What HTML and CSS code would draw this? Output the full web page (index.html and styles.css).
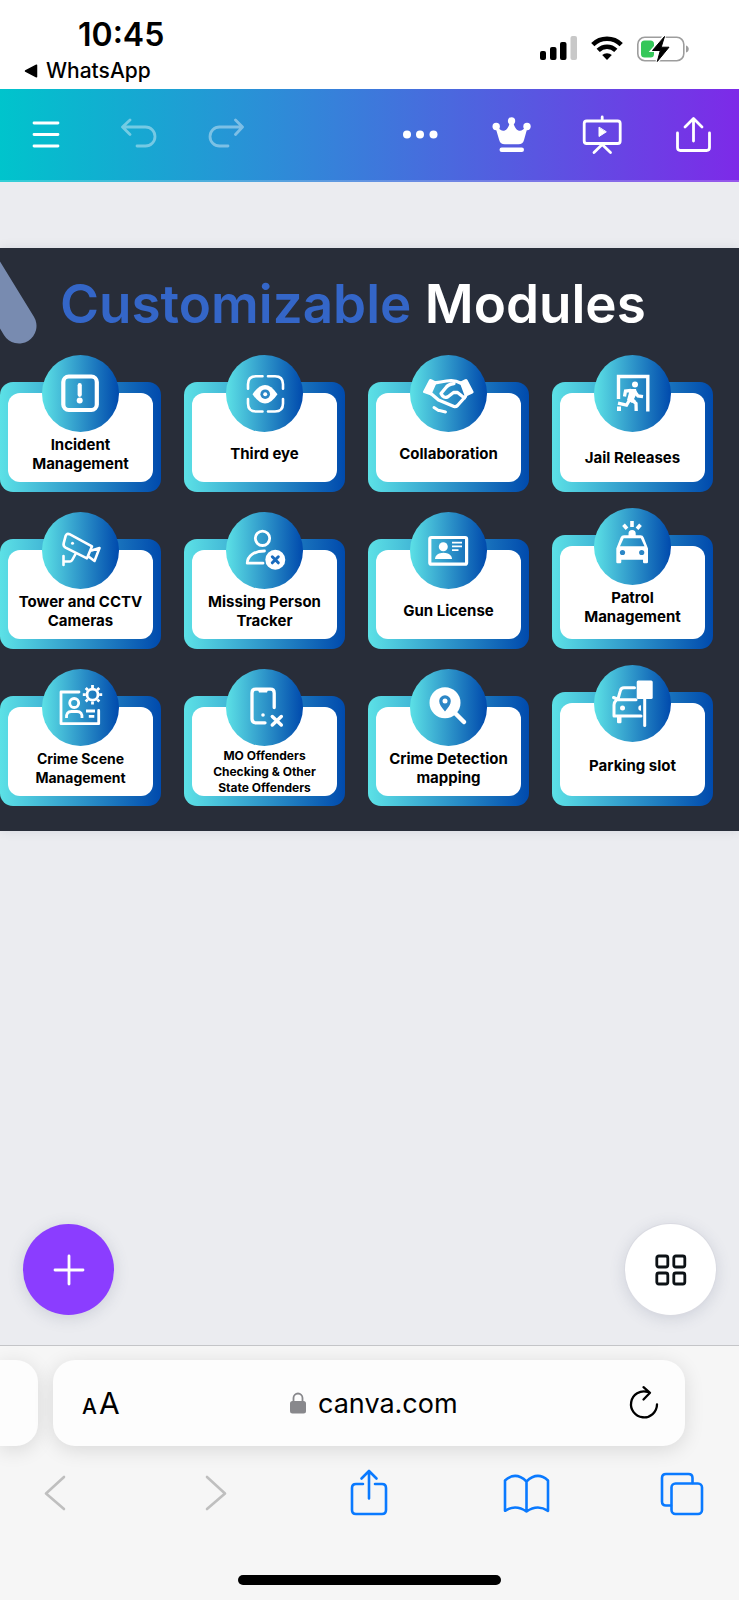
FILE: index.html
```html
<!DOCTYPE html>
<html lang="en">
<head>
<meta charset="utf-8">
<meta name="viewport" content="width=device-width, initial-scale=1">
<title>Customizable Modules</title>
<link rel="stylesheet" href="styles.css">
</head>
<body>
<div class="status">
  <div class="status-left">
    <time class="clock">10:45</time>
    <a class="back-app" href="#"><svg width="14" height="14" viewBox="0 0 14 14"><path d="M1.500 7 12.500 1.200v11.600z" fill="#000" stroke="#000" stroke-width="1.500" stroke-linejoin="round"/></svg>WhatsApp</a>
  </div>
  <div class="status-right">
    <svg width="37" height="25" viewBox="0 0 37 25"><rect x="0" y="15" width="6" height="9" rx="2"/><rect x="10" y="11" width="6.500" height="13" rx="2"/><rect x="20" y="6" width="6.500" height="18" rx="2"/><rect x="30.500" y="0" width="6.500" height="24" rx="2" fill="#c8c8c8"/></svg>
    <svg width="32" height="25" viewBox="0 0 32 25" fill="none" stroke="#000" stroke-width="4.600"><path d="M1.800 8.600a20.200 20.200 0 0 1 28.400 0"/><path d="M7.200 14.400a12.600 12.600 0 0 1 17.600 0"/><path d="M16 24l-4.800-4.900a6.900 6.900 0 0 1 9.600 0z" fill="#000" stroke="none"/></svg>
    <svg width="52" height="26" viewBox="0 0 52 26"><rect x=".8" y="1.300" width="46" height="23.400" rx="7" fill="none" stroke="#9d9d9d" stroke-width="1.600"/><path d="M49 9.500c3.700 1 3.700 6 0 7z" fill="#9d9d9d"/><rect x="4" y="4.500" width="13" height="17" rx="3.500" fill="#34c759"/><path d="M27.500 0 15 14.500h8L20 26 32.500 11.200h-8.300z" stroke="#fff" stroke-width="3"/><path d="M27.500.500 15.500 14.500h7.800L20.300 25.500 32 11.200h-7.800z" stroke="#000" stroke-linejoin="round"/></svg>
  </div>
</div>

<header class="toolbar">
  <div class="tools">
    <button aria-label="Menu"><svg class="line" viewBox="0 0 44 44"><path d="M10 11h24M10 22.500h24M10 34h24"/></svg></button>
    <button aria-label="Undo" disabled><svg class="line" viewBox="0 0 44 44"><path d="M15 8l-7.500 7L15 22.500M8 15h22.500a9.500 9.500 0 0 1 0 19H22"/></svg></button>
    <button aria-label="Redo" disabled><svg class="line" viewBox="0 0 44 44"><path d="M29.500 8l7 7-7 7.500M36 15H13.500a9.500 9.500 0 0 0 0 19H22"/></svg></button>
  </div>
  <div class="tools">
    <button aria-label="More"><svg viewBox="0 0 44 44" fill="#fff"><circle cx="9" cy="22.500" r="4"/><circle cx="22" cy="22.500" r="4"/><circle cx="35.500" cy="22.500" r="4"/></svg></button>
    <button aria-label="Premium"><svg viewBox="0 0 44 44" fill="#fff"><circle cx="22.500" cy="9" r="3.700"/><circle cx="7.200" cy="14.500" r="3.700"/><circle cx="38" cy="14.500" r="3.700"/><path d="M6.500 15.500l2.500-.5c3.500 6 9.500 5.500 12-5h3.200c2.300 10.500 8.500 11 12 5l2.300.5-3.500 12.500c-.8 3-2.500 4.200-5.500 4.200H15.800c-3 0-4.800-1.200-5.600-4.200z"/><rect x="10.500" y="35.500" width="24.500" height="4.500" rx="2.200"/></svg></button>
    <button aria-label="Present"><svg class="line" viewBox="0 0 44 44"><rect x="4.200" y="9" width="36" height="22.500" rx="2.500"/><path d="M22.200 5v3M14 40.500l8.200-8 8.300 8"/><path d="M19 15.500v9l7-4.500z" fill="#fff" stroke-width="1"/></svg></button>
    <button aria-label="Share"><svg class="line" viewBox="0 0 44 44"><path d="M22.500 29V7M14 15l8.500-8.500L31 15M6.500 21v14.500q0 3 3 3h26q3 0 3-3V21"/></svg></button>
  </div>
</header>

<main class="canvas">
  <section class="slide">
    <svg class="stripe" width="40" height="100" viewBox="0 0 40 100"><path d="M19 78-35-10" stroke="#788bb0" stroke-width="35" stroke-linecap="round"/></svg>
    <h1><span class="accent">Customizable</span> Modules</h1>
    <ul class="modules">
      <li class="module">
        <svg class="badge" viewBox="0 0 77 77"><rect x="21.300" y="21.500" width="33.500" height="33.500" rx="5.500" stroke-width="4.200"/><path d="M37.700 30.200v9.600" stroke-width="4.200"/><circle class="solid" cx="37.700" cy="45.500" r="3"/></svg>
        <div class="frame"><p class="label">Incident<br>Management</p></div>
      </li>
      <li class="module">
        <svg class="badge" viewBox="0 0 77 77"><path d="M36.500 21.200h-6.500q-8 0-8 8v4.500M42 21.200h7q8 0 8 8v4.500M36.500 56.500h-6.500q-8 0-8-8V44M42 56.500h7q8 0 8-8V44" stroke-width="2.600"/><path class="solid" d="M26.500 39.200q12.500-18.600 25 0-12.500 18.600-25 0z"/><circle class="cut" cx="39.200" cy="39.200" r="4.800"/><circle class="solid" cx="39.200" cy="39.200" r="2"/></svg>
        <div class="frame"><p class="label">Third eye</p></div>
      </li>
      <li class="module">
        <svg class="badge" viewBox="0 0 77 77"><path class="solid" d="M13 36.500 19 25q1-1.500 3-.5l5 2.500-6 13.500-7-2.500q-1.500-.5-1-1.500zM63.500 36.500 57.500 25q-1-1.500-3-.5l-5 2.500 5.500 15 7.500-3.500q1.500-.5 1-2z"/><path d="M24 28q7-1 12.500-2 8-1.500 14 2M21.500 39l7 6 15.500 6.500q2 .5 3.500-1l8-9M44 28.500q-6 1-8 4l-5 6q2.500 5.500 7 3.200l5.500-4.200h4l7 5.500" stroke-width="3.300"/><path d="M24 52.500l4.500 3M29.500 55.500l6 1.500" stroke-width="3"/></svg>
        <div class="frame"><p class="label">Collaboration</p></div>
      </li>
      <li class="module">
        <svg class="badge" viewBox="0 0 77 77"><path d="M24.500 44V21.500h29.300v35" stroke-width="3.400" stroke-linecap="butt" stroke-linejoin="miter"/><circle class="solid" cx="41" cy="29.500" r="3"/><rect class="solid" x="23" y="51.500" width="4" height="4.500"/><path d="M39 36l-3 8M37 35.500l-5.500.5-1 5.500M41 37l3 4 5 .7M37 44l5 4.500.2 7.500M35.500 45l-3 5.200-8.500-2" stroke-width="3.300" stroke-linejoin="miter" stroke-linecap="butt"/><path class="solid" d="M36 34h6l1 4-3 6 2 2-4 2-5-3z"/></svg>
        <div class="frame"><p class="label low">Jail Releases</p></div>
      </li>

      <li class="module">
        <svg class="badge" viewBox="0 0 77 77" stroke-width="2.600"><path d="M27.500 22.200q-2.600-1.200-3.800 1.500l-2 7.500q-.8 3 1.800 4.500l21.500 10.600 5-12z"/><circle class="solid" cx="30.500" cy="31.300" r="1.500"/><path d="M49.500 38.500l8-2.500-5 13-6-4.500M21.500 44v9M21.500 49.500h6.500q1.500 0 2.500-2l3-5.500"/></svg>
        <div class="frame"><p class="label">Tower and CCTV<br>Cameras</p></div>
      </li>
      <li class="module">
        <svg class="badge" viewBox="0 0 77 77"><circle cx="36.500" cy="26.300" r="7.200" stroke-width="2.800"/><path d="M38.500 39C28 39 21.500 44 21.200 51.200H37" stroke-width="2.800"/><circle class="solid" cx="49.300" cy="47.800" r="10"/><path class="mark" d="M46.300 44.800l6 6m0-6l-6 6" stroke-width="3"/></svg>
        <div class="frame"><p class="label">Missing Person<br>Tracker</p></div>
      </li>
      <li class="module">
        <svg class="badge" viewBox="0 0 77 77"><rect x="19.800" y="25.500" width="36.800" height="26.700" rx="1.500" stroke-width="3.200"/><circle class="solid" cx="33.300" cy="34.800" r="4.500"/><path class="solid" d="M25 47c0-3.500 3.500-6.300 8.500-6.300S42 43.500 42 47z"/><path d="M42 30.700h10M42 34.400h10M42 38.100h6.500" stroke-width="1.700" stroke-linecap="butt"/></svg>
        <div class="frame"><p class="label">Gun License</p></div>
      </li>
      <li class="module">
        <svg class="badge" viewBox="0 0 77 77"><path d="M38 13v6M29.500 16.800l3.500 4M46.500 16.800l-3.500 4" stroke-width="3.600" stroke-linecap="butt"/><path class="solid" d="M34.500 28v-2.500a3.600 3.600 0 0 1 7.200 0V28z"/><path class="solid" fill-rule="evenodd" d="M30 27.300h16.500q2.500 0 3.200 2.300l4.300 10.900v13.500q0 1.200-1.200 1.200h-2.600q-1.200 0-1.200-1.200v-2.300H27.300V54q0 1.200-1.200 1.200h-2.600q-1.200 0-1.200-1.200V40.500l4.300-10.900q.8-2.300 3.400-2.300zM29.700 30.300 26 38.300h24.500l-3.700-8z"/><circle class="cut" cx="28.500" cy="44.500" r="2.600"/><circle class="cut" cx="47.700" cy="44.500" r="2.600"/></svg>
        <div class="frame"><p class="label tall high">Patrol<br>Management</p></div>
      </li>

      <li class="module">
        <svg class="badge" viewBox="0 0 77 77" stroke-width="2.800"><path d="M37 23H19v31.700h37.700V41.500"/><circle cx="32.200" cy="34" r="4.500"/><path d="M24.500 49q-.5-6.500 5-6.500h5.500q5.500 0 5 6.500M44 42h9M46.800 47.300h5.500" stroke-linecap="butt"/><circle cx="50.500" cy="25.700" r="5.500"/><path d="M50.500 19v-3M50.500 32.400v3M43.800 25.700h-3M57.200 25.700h3M45.800 21l-2.100-2.100M55.200 30.400l2.100 2.100M55.200 21l2.100-2.100M45.800 30.400l-2.100 2.100" stroke-linecap="butt"/></svg>
        <div class="frame"><p class="label medium">Crime Scene<br>Management</p></div>
      </li>
      <li class="module">
        <svg class="badge" viewBox="0 0 77 77"><path d="M48.200 38.500V24q0-3.800-3.800-3.800H29.800Q26 20.200 26 24v26q0 3.800 3.800 3.800H39" stroke-width="3.300"/><path class="solid" d="M31.500 19.500h11l-1.500 4h-8z"/><circle class="solid" cx="37" cy="46" r="1.800"/><path d="M46.300 47.500l9 8.500m0-8.500l-9 8.500" stroke-width="3.500"/></svg>
        <div class="frame"><p class="label small low">MO Offenders<br>Checking &amp; Other<br>State Offenders</p></div>
      </li>
      <li class="module">
        <svg class="badge" viewBox="0 0 77 77"><circle class="solid" cx="35" cy="33.700" r="15.500"/><path d="M44 43l10 10" stroke-width="4.500"/><path class="cut" d="M35 42.500c-3.500-4-5.800-7.300-5.800-10.500a5.800 5.800 0 0 1 11.600 0c0 3.200-2.300 6.500-5.800 10.500z"/><circle class="solid" cx="35" cy="32" r="2.500"/></svg>
        <div class="frame"><p class="label">Crime Detection<br>mapping</p></div>
      </li>
      <li class="module">
        <svg class="badge" viewBox="0 0 77 77"><path d="M40.500 22.800H30q-3 0-3.700 3L24 34M19.500 32.500l2.500 1M22.500 34.800H42M22.500 34.800Q20 37 20 40v11h27" stroke-width="3"/><circle class="solid" cx="28.500" cy="43" r="2.500"/><path class="solid" d="M47 40.300v5.400a2.700 2.700 0 0 1 0-5.400zM23 51h4.500v6q0 1.200-1.200 1.200h-2Q23 58.200 23 57z"/><rect class="solid" x="42.700" y="15.400" width="16" height="18.500" rx="1.500"/><path d="M50.700 32v28.500" stroke-width="3"/></svg>
        <div class="frame"><p class="label tall">Parking slot</p></div>
      </li>
    </ul>
  </section>
  <div class="floating">
    <button class="fab add" aria-label="Add"><svg viewBox="0 0 44 44"><path d="M22 8v28M8 22h28" fill="none" stroke="#fff" stroke-width="2.800" stroke-linecap="round"/></svg></button>
    <button class="fab pages" aria-label="Pages"><svg viewBox="0 0 44 44"><g fill="none" stroke="#0d1216" stroke-width="2.800"><rect x="7.800" y="8" width="11" height="11" rx="2"/><rect x="24.800" y="8" width="11" height="11" rx="2"/><rect x="7.800" y="25" width="11" height="11" rx="2"/><rect x="24.800" y="25" width="11" height="11" rx="2"/></g></svg></button>
  </div>
</main>

<footer class="browser">
  <div class="tabs">
    <div class="prev-tab"></div>
    <div class="address">
      <button class="text-size" aria-label="Page settings"><span class="a-small">A</span><span class="a-large">A</span></button>
      <a class="site" href="#"><svg width="16" height="22" viewBox="0 0 16 22"><path d="M3.500 10V6a4.500 4.500 0 0 1 9 0v4" fill="none" stroke="#88888c" stroke-width="1.800"/><rect x="0" y="9" width="16" height="12.500" rx="2.500" fill="#88888c"/></svg>canva.com</a>
      <button class="reload" aria-label="Reload"><svg width="32" height="36" viewBox="0 0 32 36"><path d="M19.500 6.800A13 13 0 1 0 29 19.500M15.500 2.200l6.500 5.600-6.500 6.700" fill="none" stroke="#000" stroke-width="2.300" stroke-linecap="round" stroke-linejoin="round"/></svg></button>
    </div>
  </div>
  <nav class="nav">
    <button aria-label="Back" disabled><svg viewBox="0 0 48 48"><path d="M32 8 14 24.500 32 40"/></svg></button>
    <button aria-label="Forward" disabled><svg viewBox="0 0 48 48"><path d="M18 8l18 16.500L18 40"/></svg></button>
    <button aria-label="Share"><svg viewBox="0 0 48 48"><path d="M18 15h-7q-4 0-4 4v22q0 4 4 4h26q4 0 4-4V19q0-4-4-4h-7M24 29.500V2.500M16.500 9.500 24 2l7.500 7.500"/></svg></button>
    <button aria-label="Bookmarks"><svg viewBox="0 0 48 48"><path d="M24.500 12.500Q13.500 2 3 11.500v30.300q10.500-7 21.500.7 11-7.700 21.500-.7V11.500Q35.500 2 24.500 12.500v30"/></svg></button>
    <button aria-label="Tabs"><svg viewBox="0 0 48 48"><path d="M13 36.500H8q-4 0-4-4V9q0-4 4-4h22.500q4 0 4 4v5"/><rect x="13.500" y="14.500" width="30.500" height="30.500" rx="4"/></svg></button>
  </nav>
  <div class="home-indicator"></div>
</footer>
</body>
</html>
```
FILE: styles.css
```css
* { box-sizing: border-box; }

body {
  margin: 0;
  min-height: 100vh;
  display: flex;
  flex-direction: column;
  overflow-x: hidden;
  font-family: Inter, "Liberation Sans", sans-serif;
  color: #000;
  background: #fff;
}

button {
  border: 0;
  padding: 0;
  background: none;
  color: inherit;
  font: inherit;
  line-height: 1;
}

a { color: inherit; text-decoration: none; }
svg { display: block; }

/* Status bar */
.status {
  height: 89px;
  display: flex;
  justify-content: space-between;
  padding: 16px 50px 0 24px;
}
.status-left { display: flex; flex-direction: column; }
.clock {
  padding-left: 54px;
  font-size: 32px;
  font-weight: 600;
  line-height: 38px;
}
.back-app {
  display: flex;
  align-items: center;
  gap: 8px;
  font-size: 21px;
  font-weight: 500;
  line-height: 34px;
}
.status-right { display: flex; gap: 14px; padding-top: 20px; }

/* Editor toolbar */
.toolbar {
  height: 93px;
  display: flex;
  align-items: center;
  justify-content: space-between;
  padding: 0 24px 2px;
  border-bottom: 2px solid rgba(255, 255, 255, 0.2);
  background: linear-gradient(90deg, #00c4cc, #3b7bdb 49%, #7d2ae8) border-box;
}
.tools { display: flex; gap: 47px; }
.tools svg { width: 44px; height: 44px; }
.tools button:disabled { opacity: 0.4; }
.line {
  fill: none;
  stroke: #fff;
  stroke-width: 2.8;
  stroke-linecap: round;
  stroke-linejoin: round;
}

/* Canvas and slide */
.canvas {
  flex: 1;
  display: flex;
  flex-direction: column;
  padding-top: 66px;
  background: #ebecf0;
}
.slide {
  position: relative;
  overflow: hidden;
  padding: 22px 26px 25px 0;
  background: #282d39;
  box-shadow: 0 0 10px rgba(64, 79, 109, 0.12);
}
.stripe { position: absolute; left: 0; top: 0; fill: none; }
h1 {
  margin: 0;
  padding: 0 0 17px 60px;
  font-size: 53px;
  font-weight: 600;
  line-height: 68px;
  white-space: nowrap;
  color: #fff;
}
.accent { color: #3466c8; }

.modules {
  display: grid;
  grid-template-columns: repeat(4, 1fr);
  align-items: end;
  gap: 16px 23px;
  margin: 0;
  padding: 0;
  list-style: none;
}
.badge {
  position: relative;
  width: 77px;
  height: 77px;
  margin: 0 auto -50px;
  border-radius: 50%;
  background: linear-gradient(90deg, #5ce1e6, #004aad);
  fill: none;
  stroke: #fff;
  stroke-linecap: round;
  stroke-linejoin: round;
}
.solid { fill: #fff; stroke: none; }
.cut { fill: #2b86c6; stroke: none; }
.mark { stroke: #1a6bbd; }

.frame {
  padding: 11px 8px 10px;
  border-radius: 13px;
  background: linear-gradient(90deg, #5ce1e6, #004aad);
}
.label {
  display: flex;
  flex-direction: column;
  justify-content: center;
  min-height: 89px;
  margin: 0;
  padding-top: 32px;
  border-radius: 12px;
  background: #fff;
  font-size: 15px;
  font-weight: 700;
  line-height: 19px;
  text-align: center;
  white-space: nowrap;
}
.label.tall { min-height: 93px; }
.label.low { padding-top: 40px; }
.label.high { padding-top: 28px; }
.label.medium { font-size: 14px; }
.label.small { font-size: 12px; line-height: 16px; }

/* Floating actions */
.floating {
  display: flex;
  justify-content: space-between;
  margin-top: auto;
  padding: 0 23px 30px;
}
.fab {
  display: grid;
  place-items: center;
  width: 91px;
  height: 91px;
  border-radius: 50%;
  box-shadow: 0 3px 16px rgba(64, 79, 109, 0.18);
}
.fab svg { width: 44px; height: 44px; }
.add { background: #8b3dff; }
.pages { background: #fff; box-shadow: 0 0 0 1px #dadbe2, 0 3px 16px rgba(64, 79, 109, 0.18); }

/* Browser chrome */
.browser {
  height: 255px;
  display: flex;
  flex-direction: column;
  border-top: 1px solid #c4c5c8;
  background: #f6f6f6;
}
.tabs { display: flex; gap: 15px; padding: 14px 54px 0 0; }
.prev-tab {
  width: 38px;
  border-radius: 0 22px 22px 0;
  background: #fdfdfd;
  box-shadow: 0 4px 20px rgba(0, 0, 0, 0.12);
}
.address {
  flex: 1;
  height: 86px;
  display: flex;
  align-items: center;
  justify-content: space-between;
  padding: 0 25px 0 29px;
  border-radius: 22px;
  background: #fdfdfd;
  box-shadow: 0 4px 20px rgba(0, 0, 0, 0.12);
}
.text-size { display: flex; align-items: baseline; gap: 2px; }
.a-small { font-size: 21px; font-weight: 500; }
.a-large { font-size: 30px; }
.site { display: flex; align-items: center; gap: 12px; font-size: 27px; }
.nav {
  display: flex;
  justify-content: space-between;
  padding: 23px 33px 0 32px;
}
.nav svg {
  width: 48px;
  height: 48px;
  fill: none;
  stroke: #0a7aff;
  stroke-width: 2.6;
  stroke-linecap: round;
  stroke-linejoin: round;
}
.nav button:disabled svg { stroke: #bfbfbf; }
.home-indicator {
  width: 263px;
  height: 10px;
  margin: auto auto 15px;
  border-radius: 5px;
  background: #000;
}
```
